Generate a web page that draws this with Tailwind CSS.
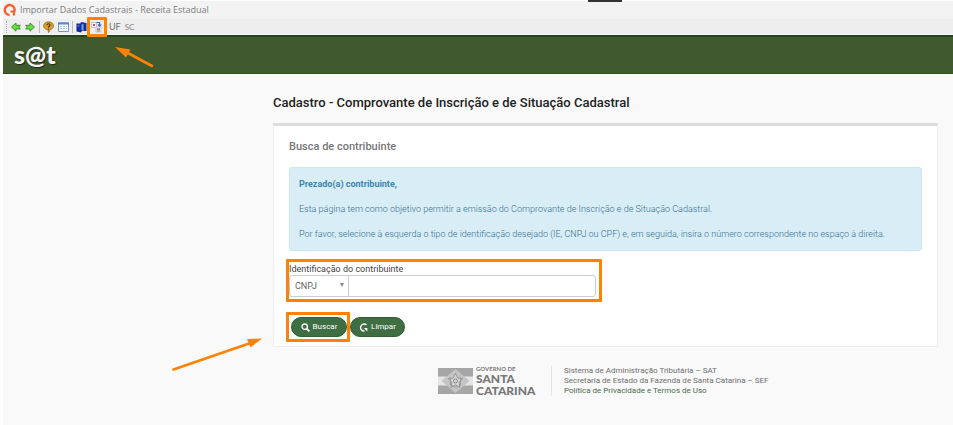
<!DOCTYPE html>
<html lang="pt-BR">
<head>
<meta charset="utf-8">
<meta name="viewport" content="width=device-width, initial-scale=1">
<title>Importar Dados Cadastrais - Receita Estadual</title>
<script src="https://cdn.jsdelivr.net/npm/@tailwindcss/browser@4"></script>
</head>
<body class="relative flex min-h-screen flex-col bg-white pt-px pl-[3px] font-['Roboto',sans-serif] text-[#333]">
<!-- Window title -->
<div class="flex h-[18px] items-center gap-[3px] bg-[#f3f3f3] font-['Open_Sans',sans-serif] text-[9px] text-[#7d7d7d]">
  <svg class="size-[14px]" viewBox="0 0 14 14" fill="none" stroke="#f4622d" stroke-width="2.4"><path d="M6.500 12A5 5 0 1 1 11.500 8.500"/><path d="M7.500 8.500h3.500v4" stroke-width="2.200"/></svg>
  <span>Importar Dados Cadastrais - Receita Estadual</span>
</div>
<!-- Toolbar -->
<div class="flex h-4 items-center border-b border-[#f8f8f8] bg-[#eee] pl-[3px] font-['Lato',sans-serif] text-[#707070]">
  <span class="mr-1 h-3 border-l border-dotted border-[#aaa]"></span>
  <button class="mr-1" aria-label="Voltar"><svg class="h-3 w-[10px]" viewBox="0 0 10 12"><path d="M.5 6 5 2v2.300h4.300L7.800 6l1.500 2H5v2.200z" fill="#70da45" stroke="#27921e" stroke-width=".9"/></svg></button>
  <button class="mr-1" aria-label="Avançar"><svg class="h-3 w-[10px]" viewBox="0 0 10 12"><path d="M9.500 6 5 2v2.300H.7L2.200 6 .7 8H5v2.200z" fill="#70da45" stroke="#27921e" stroke-width=".9"/></svg></button>
  <span class="mr-[3px] h-3 border-l border-[#bbb]"></span>
  <button class="mr-1" aria-label="Ajuda"><svg class="h-3 w-[11px]" viewBox="0 0 11 12"><path d="M5.500.8C8.500.8 10.400 2.800 10.400 4.800 10.400 6.800 9 8 7.500 8.500L5.500 11.500 5 8.800C2.500 8.500.6 7 .6 5S2.500.8 5.500.8z" fill="#dda02c" stroke="#8c661e" stroke-width=".8"/><path d="M4 4.200c0-2 3.200-1.800 3 0-.2 1.200-1.500 1-1.500 2.300M5.500 7.500v1" fill="none" stroke="#493313" stroke-width="1.200"/></svg></button>
  <button class="mr-[3px]" aria-label="Formulário"><svg class="h-3 w-[11px]" viewBox="0 0 11 12"><path d="M.5 2h10v8.500H.5z" fill="#f8fbff" stroke="#7396cc"/><path d="M0 1.500h11v2H0z" fill="#5685d5"/><path d="M2 5.500h2m1 0h2m1 0h1M2 7.500h2m1 0h2m1 0h1" stroke="#a4b9db"/></svg></button>
  <span class="mr-[3px] h-3 border-l border-[#bbb]"></span>
  <button class="mr-1" aria-label="Arquivos"><svg class="h-3 w-[11px]" viewBox="0 0 11 12"><path d="M.4 2.500h4L5 1l5.500 1v8H6l-1 1.500-4.500-1z" fill="#172d9b"/><path d="M5.500 3.500v5l2 2V3z" fill="#75a8df"/><path d="M1.500 4h2v1.500h-2z" fill="#6079cc"/></svg></button>
  <button class="mr-[7px]" aria-label="Importar"><svg class="h-3 w-[11px]" viewBox="0 0 11 12"><path d="M.5 1.500h5v5h-5zM5 6h5v5H5z" fill="#fafafa" stroke="#b8b8c8" stroke-width=".8"/><path d="M2 4h2" stroke="#d24a50" stroke-width="1.800"/><path d="M5.500 1.500h3.200v3M7 3.500l1.700 1.800 1.600-1.800" fill="none" stroke="#4260aa" stroke-width="1.100"/><path d="M6 8h3v3H6z" fill="#d8ae76"/><path d="M6 8h3" stroke="#46518d"/></svg></button>
  <button class="mr-1 text-[9px]">UF</button>
  <button class="text-[8px] text-[#888]">SC</button>
</div>
<!-- Site header -->
<header class="flex h-[39px] items-center border-t-2 border-b border-t-[#24451d] border-b-[#315022] bg-[#40592d] pl-[11px]">
  <a href="#" class="pb-[3px] font-['Lato',sans-serif] text-[25px] leading-7 font-black text-[#f5f5f5] [text-shadow:1px_1px_1px_#0008]">s@t</a>
</header>
<div class="flex-1 bg-[#f9f9f9] pt-[19px] pr-[15px] pl-[270px]">
  <main>
    <h1 class="text-[13px] leading-5 font-medium text-[#222]">Cadastro - Comprovante de Inscrição e de Situação Cadastral</h1>
    <section class="mt-[10px] border border-t-[3px] border-[#eee] border-t-[#ddd] bg-white px-[15px] pt-[11px] pb-[9px]">
      <h2 class="text-[11px] leading-5 font-medium text-[#777]">Busca de contribuinte</h2>
      <div class="mt-[10px] flex flex-col gap-[11px] rounded-[3px] border border-[#c9e8f1] bg-[#d9edf7] px-[9px] py-[9px] text-[9px] leading-[14px] font-light text-[#31708f]">
        <p class="font-bold text-[#3a87ad]">Prezado(a) contribuinte,</p>
        <p>Esta página tem como objetivo permitir a emissão do Comprovante de Inscrição e de Situação Cadastral.</p>
        <p>Por favor, selecione à esquerda o tipo de identificação desejado (IE, CNPJ ou CPF) e, em seguida, insira o número correspondente no espaço à direita.</p>
      </div>
      <form>
        <div class="relative mt-3 w-[307px] max-w-full">
          <label for="identificacao" class="block text-[9px] leading-3 text-[#444]">Identificação do contribuinte</label>
          <div class="flex h-[22px] rounded-[3px] border border-[#ccc]">
            <div class="relative w-[59px] border-r border-[#ccc]">
              <select aria-label="Tipo de identificação" class="block h-5 w-full appearance-none pl-[5px] text-[9px] leading-5 text-[#666] outline-none"><option>CNPJ</option><option>CPF</option><option>IE</option></select>
              <svg class="pointer-events-none absolute top-[7px] right-1 size-1" viewBox="0 0 4 4"><path d="M0 0h4L2 4z" fill="#888"/></svg>
            </div>
            <input id="identificacao" type="text" class="min-w-0 flex-1 px-1 text-[9px] outline-none">
          </div>
          <span class="pointer-events-none absolute -top-1 -right-[6px] -bottom-[5px] -left-[3px] rounded-[1px] border-[3px] border-[#ff8208]"></span>
        </div>
        <div class="mt-5 flex gap-[3px] pl-[2px] text-[8px] text-white">
          <div class="relative">
            <button type="submit" class="flex h-5 w-14 items-center justify-center gap-[3px] rounded-full border border-[#345e36] bg-[#3f6e42]"><svg class="size-[9px]" viewBox="0 0 9 9" fill="none" stroke="currentColor"><circle cx="3.700" cy="3.700" r="2.700" stroke-width="1.300"/><path d="m5.800 5.800 2.600 2.600" stroke-width="1.700"/></svg>Buscar</button>
            <span class="pointer-events-none absolute -top-[5px] -right-[3px] -bottom-[5px] -left-[5px] rounded-[1px] border-[3px] border-[#ff8208]"></span>
          </div>
          <button type="reset" class="flex h-5 w-[55px] items-center justify-center gap-[3px] rounded-full border border-[#345e36] bg-[#3f6e42]"><svg class="size-[9px]" viewBox="0 0 9 9" fill="none" stroke="currentColor" stroke-width="1.400"><path d="M7.500 2A3.500 3.500 0 1 0 5.500 8"/><path d="M4.800 5h3.500v3.500z" fill="currentColor" stroke="none"/></svg>Limpar</button>
        </div>
      </form>
    </section>
  </main>
  <footer class="mt-[18px] flex items-center pl-[165px] text-[8px] leading-[10px] text-[#6e6e6e]">
    <svg class="h-[26px] w-[35px] shrink-0" viewBox="0 0 35 26"><path d="M0 0h35v26H0z" fill="#a6a6a6"/><path d="M0 8.500h35v9H0z" fill="#e5e5e5"/><path d="m17.500 1 14 12-14 12-14-12z" fill="#c4c4c4"/><path d="m17.500 5.500 2.200 4.600 5 .7-3.700 3.500.9 5-4.400-2.400-4.400 2.400.9-5-3.700-3.500 5-.7z" fill="#d8d8d8" stroke="#888" stroke-width=".8"/><path d="M12.500 9v8l4 2h3l3-2V9" fill="none" stroke="#939393" stroke-width=".8"/><circle cx="17.500" cy="13" r="2" fill="none" stroke="#858585"/></svg>
    <div class="ml-[3px] w-[63px] font-['Lato',sans-serif] text-[12px] leading-3 font-black text-[#777]">
      <div class="text-[6px] leading-[8px] font-bold">GOVERNO DE</div>
      <div>SANTA</div>
      <div>CATARINA</div>
    </div>
    <div class="ml-3 border-l border-[#e5e5e5] pl-3">
      <p>Sistema de Administração Tributária – SAT</p>
      <p>Secretaria de Estado da Fazenda de Santa Catarina – SEF</p>
      <p><a href="#" class="text-[#4a6a4c]">Política de Privacidade e Termos de Uso</a></p>
    </div>
  </footer>
</div>
<!-- Annotations drawn over the page -->
<span class="absolute top-0 left-[588px] h-[2px] w-[34px] bg-[#333]"></span>
<span class="pointer-events-none absolute top-[17px] left-[87px] h-5 w-5 rounded-[1px] border-[3px] border-[#ff8208]"></span>
<svg class="pointer-events-none absolute top-[44px] left-[112px] h-[26px] w-[44px]" viewBox="0 0 44 26"><path d="M40 22 15 8.500" stroke="#ff8208" stroke-width="2.600" stroke-linecap="round"/><path d="M3 3 18.500 5.500 14 13.500z" fill="#ff8208"/></svg>
<svg class="pointer-events-none absolute top-[334px] left-[170px] h-10 w-[94px]" viewBox="0 0 94 40"><path d="M3.500 35.500 82 8.500" stroke="#ff8208" stroke-width="2.600" stroke-linecap="round"/><path d="M92 4.500 77 5l3.500 8.500z" fill="#ff8208"/></svg>
</body>
</html>
